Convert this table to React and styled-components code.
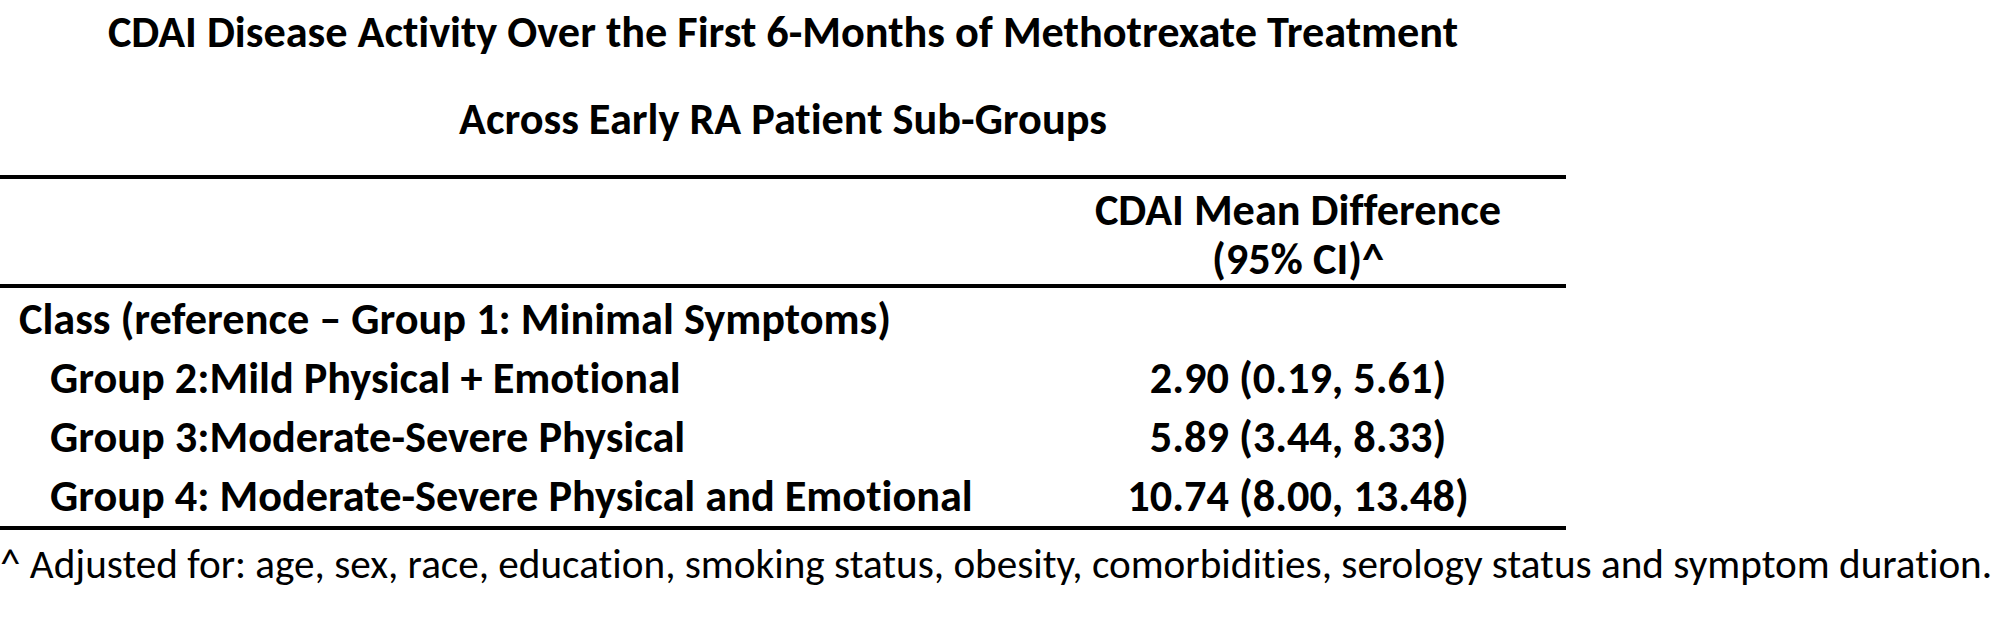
// third-party
import React from "react";
import styled, { createGlobalStyle } from "styled-components";

// ===== START OF STYLING =====
const GlobalStyle = createGlobalStyle`
  html, body {
    margin: 0;
    padding: 0;
    background: #ffffff;
  }

  body {
    font-family: Carlito, Calibri, "Liberation Sans", sans-serif;
    font-variant-ligatures: none;
    color: #000000;
  }
`;

const Page = styled.div`
  display: flex;
  flex-direction: column;
  align-items: flex-start;
`;

const TitleBlock = styled.div`
  display: flex;
  flex-direction: column;
  align-items: center;
  width: 1566px;
  padding-top: 5px;
`;

const TitleLine = styled.div`
  font-size: 44.3px;
  font-weight: 700;
  line-height: 54px;
  white-space: nowrap;

  &:not(:first-child) {
    margin-top: 33px;
  }
`;

const Table = styled.table`
  width: 1566px;
  margin-top: 29px;
  border-collapse: separate;
  border-spacing: 0;
  table-layout: fixed;
  font-family: Carlito, Calibri, "Liberation Sans", sans-serif;
  font-variant-ligatures: none;
  font-size: 44.3px;
  font-weight: 700;
  color: #000000;
`;

const HeadCell = styled.th`
  padding: 7px 0 0;
  border-top: 4px solid #000000;
  border-bottom: 4px solid #000000;
  font-weight: 700;
  line-height: 49px;
  text-align: center;
  vertical-align: top;
`;

const HeadLine = styled.span`
  display: block;
  white-space: nowrap;
`;

const LabelCell = styled.td`
  padding: ${({ $first }) => ($first ? "2px" : "0")} 0 0
    ${({ $indent }) => $indent}px;
  border-bottom: ${({ $last }) => ($last ? "4px solid #000000" : "none")};
  line-height: 59px;
  text-align: left;
  white-space: nowrap;
`;

const ValueCell = styled.td`
  padding: ${({ $first }) => ($first ? "2px" : "0")} 0 0;
  border-bottom: ${({ $last }) => ($last ? "4px solid #000000" : "none")};
  line-height: 59px;
  text-align: center;
  white-space: nowrap;
`;

const Footnote = styled.div`
  margin-top: 9px;
  font-size: 41.2px;
  font-weight: 400;
  line-height: 50px;
  white-space: nowrap;
`;
// ===== END OF STYLING =====

const rows = [
  { label: "Class (reference \u2013 Group 1: Minimal Symptoms)", value: "", indent: 19 },
  { label: "Group 2:Mild Physical + Emotional", value: "2.90 (0.19, 5.61)", indent: 50 },
  { label: "Group 3:Moderate-Severe Physical", value: "5.89 (3.44, 8.33)", indent: 50 },
  {
    label: "Group 4: Moderate-Severe Physical and Emotional",
    value: "10.74 (8.00, 13.48)",
    indent: 50,
  },
];

const App = () => {
  const renderedRows = rows.map((row, index) => {
    const first = index === 0;
    const last = index === rows.length - 1;

    return (
      <tr key={index}>
        <LabelCell $indent={row.indent} $first={first} $last={last}>
          {row.label}
        </LabelCell>
        <ValueCell $first={first} $last={last}>
          {row.value}
        </ValueCell>
      </tr>
    );
  });

  return (
    <Page>
      <GlobalStyle />
      <TitleBlock>
        <TitleLine>
          CDAI Disease Activity Over the First 6-Months of Methotrexate Treatment
        </TitleLine>
        <TitleLine>Across Early RA Patient Sub-Groups</TitleLine>
      </TitleBlock>
      <Table>
        <colgroup>
          <col style={{ width: "1030px" }} />
          <col style={{ width: "536px" }} />
        </colgroup>
        <thead>
          <tr>
            <HeadCell />
            <HeadCell>
              <HeadLine>CDAI Mean Difference</HeadLine>
              <HeadLine>(95% CI)^</HeadLine>
            </HeadCell>
          </tr>
        </thead>
        <tbody>{renderedRows}</tbody>
      </Table>
      <Footnote>
        ^ Adjusted for: age, sex, race, education, smoking status, obesity,
        comorbidities, serology status and symptom duration.
      </Footnote>
    </Page>
  );
};

export default App;
